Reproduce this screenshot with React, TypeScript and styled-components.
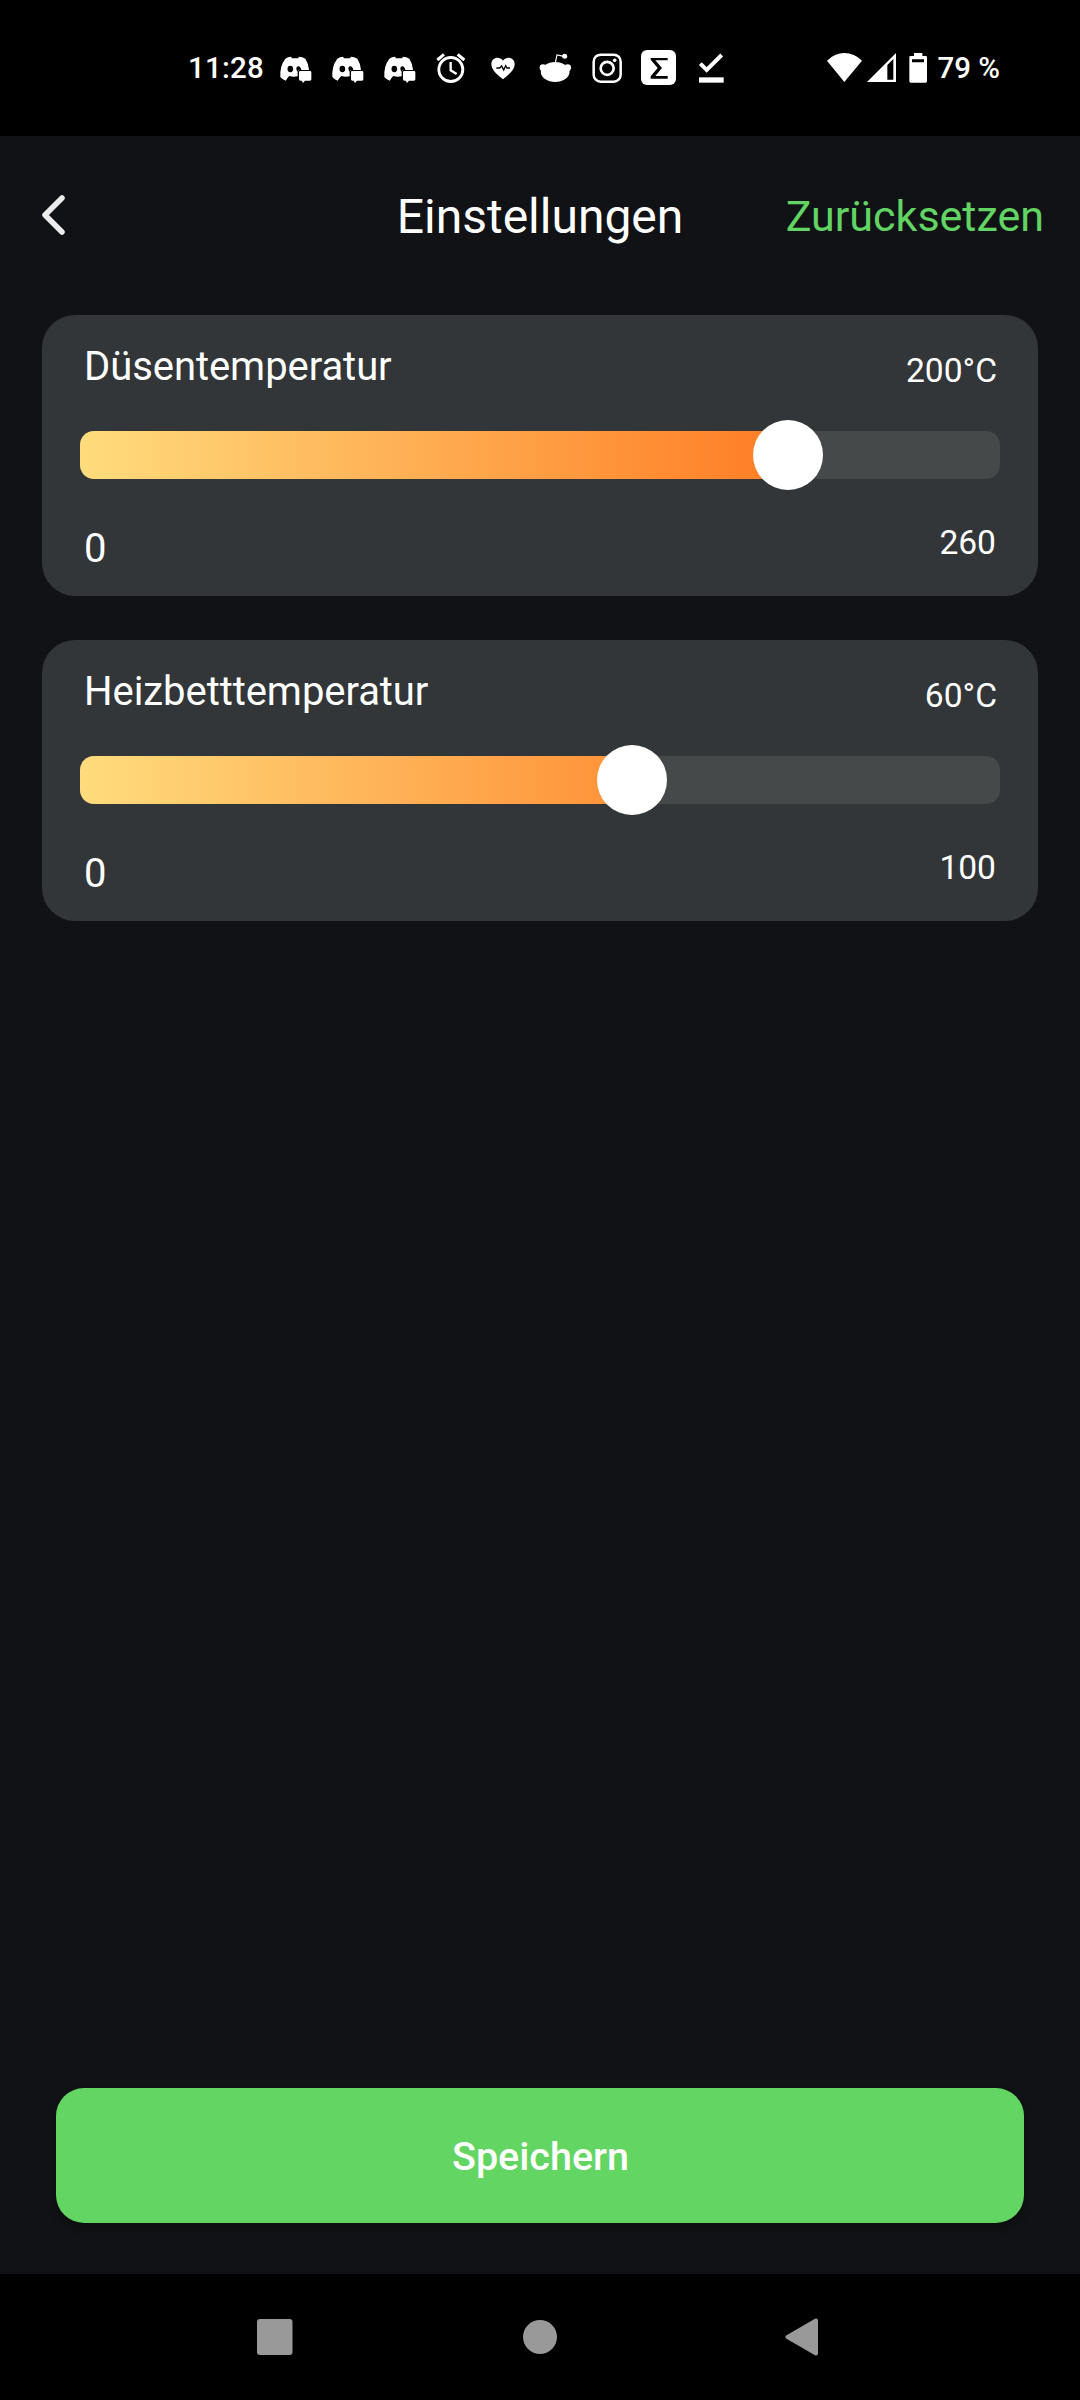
import React from "react";
import styled, { createGlobalStyle } from "styled-components";

const GlobalStyle = createGlobalStyle`
  *, *::before, *::after { box-sizing: border-box; }
  body { margin: 0; background: #111215; }
  button { border: 0; padding: 0; margin: 0; background: none; font: inherit; color: inherit; }
`;

const Screen = styled.div`
  width: 1080px;
  height: 2400px;
  display: flex;
  flex-direction: column;
  background: #111215;
  color: #fff;
  font-family: Roboto, "Noto Sans", sans-serif;
  overflow: hidden;
`;

const StatusBar = styled.div`
  flex: none;
  height: 136px;
  padding: 48px 80px 48px 188px;
  display: flex;
  align-items: center;
  background: #000;
  font-size: 29.5px;
  font-weight: 500;
  line-height: 40px;
  white-space: nowrap;
`;

const Clock = styled.span`
  width: 81px;
  letter-spacing: 0.2px;
`;

const Notifications = styled.div`
  display: flex;
`;

const SystemIcons = styled.div`
  display: flex;
  margin-left: auto;
`;

const Glyph = styled.svg<{ $w: number }>`
  display: block;
  flex: none;
  width: ${(p) => p.$w}px;
  height: 40px;
`;

const Header = styled.header`
  flex: none;
  height: 160px;
  padding: 2px 36px 0 32px;
  display: grid;
  grid-template-columns: 1fr auto 1fr;
  align-items: center;
`;

const BackButton = styled.button`
  width: 44px;
  height: 60px;
  justify-self: start;

  svg { display: block; }
`;

const Title = styled.h1`
  margin: 0;
  padding-left: 4px;
  font-size: 48px;
  font-weight: 400;
  line-height: 56px;
`;

const ResetButton = styled.button`
  justify-self: end;
  padding-bottom: 2px;
  color: #62d463;
  font-size: 43px;
  line-height: 56px;
`;

const Settings = styled.main`
  flex: 1;
  display: flex;
  flex-direction: column;
  gap: 44px;
  padding: 19px 42px 0;
`;

const Card = styled.section`
  height: 281px;
  border-radius: 33px;
  background: #333639;
`;

const CardRow = styled.div<{ $height: number; $right: number }>`
  display: flex;
  justify-content: space-between;
  height: ${(p) => p.$height}px;
  padding: 0 ${(p) => p.$right}px 0 42px;
`;

const Label = styled.span<{ $top: number }>`
  padding-top: ${(p) => p.$top}px;
  font-size: 40px;
  line-height: 48px;
  letter-spacing: -0.06px;
`;

const Value = styled.span<{ $top: number }>`
  padding-top: ${(p) => p.$top}px;
  font-size: 33.6px;
  line-height: 40px;
`;

const Track = styled.div`
  position: relative;
  height: 48px;
  margin: 0 38px;
  border-radius: 14px;
  background: #46494a;
`;

const Fill = styled.div`
  height: 100%;
  border-radius: 14px 0 0 14px;
  background: linear-gradient(90deg, #ffdc7d 0%, #ff7e26 75%, #ff5c00 100%) 0 0 / 920px 100% no-repeat;
`;

const Thumb = styled.div`
  position: absolute;
  top: -11px;
  width: 70px;
  height: 70px;
  margin-left: -35px;
  border-radius: 50%;
  background: #fff;
`;

const Footer = styled.footer`
  flex: none;
  padding: 0 56px 51px;
`;

const SaveButton = styled.button`
  display: block;
  width: 100%;
  height: 135px;
  padding: 3px 0 0 1px;
  border-radius: 28px;
  background: #63d563;
  box-shadow: 0 5px 10px rgba(0, 0, 0, 0.28);
  font-size: 39.5px;
  font-weight: 500;
  line-height: 48px;
`;

const NavBar = styled.nav`
  flex: none;
  height: 126px;
  padding: 0 255px;
  display: flex;
  align-items: center;
  justify-content: space-between;
  background: #000;
`;

const DiscordIcon = () => (
  <Glyph $w={52} viewBox="297 54 156 120">
    <path
      fill="#fff"
      d="M346 86 Q354 80 363 80 L366 85 H384 L387 80 Q397 80 406 86 Q416 101 417 120 H388 Q383 121 383 127 V139 Q370 142 358 138 L353 143 L347 152 Q337 149 331 141 Q329 108 346 86Z"
    />
    <ellipse cx="361" cy="117" rx="8.5" ry="9.5" />
    <path d="M383 127 Q375 114 383 109 Q391 107 394 120 L384 121Z" />
    <path fill="#fff" d="M390 123 H420 Q424 123 424 127 V148 Q424 152 420 152 H405 L399 159 L395 152 H391 Q387 152 387 148 V127 Q387 123 390 123Z" />
  </Glyph>
);

const AlarmIcon = () => (
  <Glyph $w={52} viewBox="15 54 156 120" fill="none" stroke="#fff">
    <circle cx="92.5" cy="118.5" r="36" strokeWidth="8.5" />
    <path d="M92 96 V121 L110 132" strokeWidth="7" />
    <path d="M52 90 L72 73 M113 73 L133 90" strokeWidth="9" />
  </Glyph>
);

const HeartIcon = () => (
  <Glyph $w={52} viewBox="171 54 156 120">
    <path
      fill="#fff"
      d="M249 148 C232 133 214 121 214 102 C214 90 223 83 232 83 C240 83 246 87 249 92 C252 87 258 83 266 83 C275 83 284 90 284 102 C284 121 266 133 249 148Z"
    />
    <path d="M229 114 H239 L245 108 L251 120 L257 107 L261 114 H270" fill="none" stroke="#000" strokeWidth="4" />
  </Glyph>
);

const RedditIcon = () => (
  <Glyph $w={52} viewBox="327 54 156 120" fill="#fff">
    <circle cx="369" cy="113" r="10" />
    <circle cx="443" cy="113" r="10" />
    <ellipse cx="405.5" cy="126" rx="43" ry="30" />
    <circle cx="434" cy="79" r="7.5" />
    <path d="M406 98 L411 75 L432 79" fill="none" stroke="#fff" strokeWidth="3.5" />
  </Glyph>
);

const InstagramIcon = () => (
  <Glyph $w={52} viewBox="483 54 156 120" fill="none" stroke="#fff">
    <rect x="521" y="74" width="81" height="81" rx="21" strokeWidth="7.500" />
    <circle cx="561.5" cy="115" r="19.500" strokeWidth="8" />
    <circle cx="584" cy="91" r="5.500" fill="#fff" stroke="none" />
  </Glyph>
);

const SigmaIcon = () => (
  <Glyph $w={52} viewBox="639 54 156 120">
    <rect x="663" y="60" width="105" height="105" rx="18" fill="#fff" />
    <path d="M692 84 H743 V91 H706 L726 114 L706 138 H743 V146 H692 V139 L713 114 L692 89Z" />
  </Glyph>
);

const DoneIcon = () => (
  <Glyph $w={52} viewBox="795 54 156 120" fill="none" stroke="#fff">
    <path d="M841 101 L860 120 L905 75" strokeWidth="12" />
    <path d="M837 150 H911" strokeWidth="16" />
  </Glyph>
);

const SystemStatus = () => (
  <Glyph $w={110} viewBox="81 54 330 120" fill="#fff">
    <path d="M81 92 Q104 69 133 69 Q163 69 186 92 L133 156Z" />
    <path fillRule="evenodd" d="M201 156 L288 69 V156Z M262 105 V149 H280 V87Z" />
    <path fillRule="evenodd" d="M342 69 H367 V78 H377 Q381 78 381 82 V154 Q381 158 377 158 H332 Q328 158 328 154 V82 Q328 78 332 78 H342Z M336 88 V97 H372 V88Z" />
  </Glyph>
);

interface TemperatureProps {
  label: string;
  value: number;
  max: number;
}

const TemperatureCard = ({ label, value, max }: TemperatureProps) => {
  const percent = `${(value / max) * 100}%`;
  return (
    <Card>
      <CardRow $height={116} $right={41}>
        <Label $top={28}>{label}</Label>
        <Value $top={36}>{value}°C</Value>
      </CardRow>
      <Track>
        <Fill style={{ width: percent }} />
        <Thumb style={{ left: percent }} />
      </Track>
      <CardRow $height={117} $right={42}>
        <Label $top={46}>0</Label>
        <Value $top={44}>{max}</Value>
      </CardRow>
    </Card>
  );
};

export default function App() {
  return (
    <>
      <GlobalStyle />
      <Screen>
        <StatusBar>
          <Clock>11:28</Clock>
          <Notifications>
            <DiscordIcon />
            <DiscordIcon />
            <DiscordIcon />
            <AlarmIcon />
            <HeartIcon />
            <RedditIcon />
            <InstagramIcon />
            <SigmaIcon />
            <DoneIcon />
          </Notifications>
          <SystemIcons>
            <SystemStatus />
            <span>79 %</span>
          </SystemIcons>
        </StatusBar>
        <Header>
          <BackButton aria-label="Zurück">
            <svg width="44" height="60" viewBox="0 0 44 60" fill="none" stroke="#ececec" strokeWidth="5.500">
              <path d="M30 11 L13 28 L30 45" strokeLinecap="round" strokeLinejoin="round" />
            </svg>
          </BackButton>
          <Title>Einstellungen</Title>
          <ResetButton>Zurücksetzen</ResetButton>
        </Header>
        <Settings>
          <TemperatureCard label="Düsentemperatur" value={200} max={260} />
          <TemperatureCard label="Heizbetttemperatur" value={60} max={100} />
        </Settings>
        <Footer>
          <SaveButton>Speichern</SaveButton>
        </Footer>
        <NavBar>
          <svg width="40" height="40" viewBox="0 0 40 40" fill="#999">
            <rect x="2" y="2" width="35.500" height="36" rx="3" />
          </svg>
          <svg width="40" height="40" viewBox="0 0 40 40" fill="#999">
            <circle cx="20" cy="20" r="17" />
          </svg>
          <svg width="40" height="40" viewBox="0 0 40 40" fill="#999" stroke="#999" strokeWidth="4" strokeLinejoin="round">
            <path d="M2.500 20 L31 3.500 V36.500Z" />
          </svg>
        </NavBar>
      </Screen>
    </>
  );
}
